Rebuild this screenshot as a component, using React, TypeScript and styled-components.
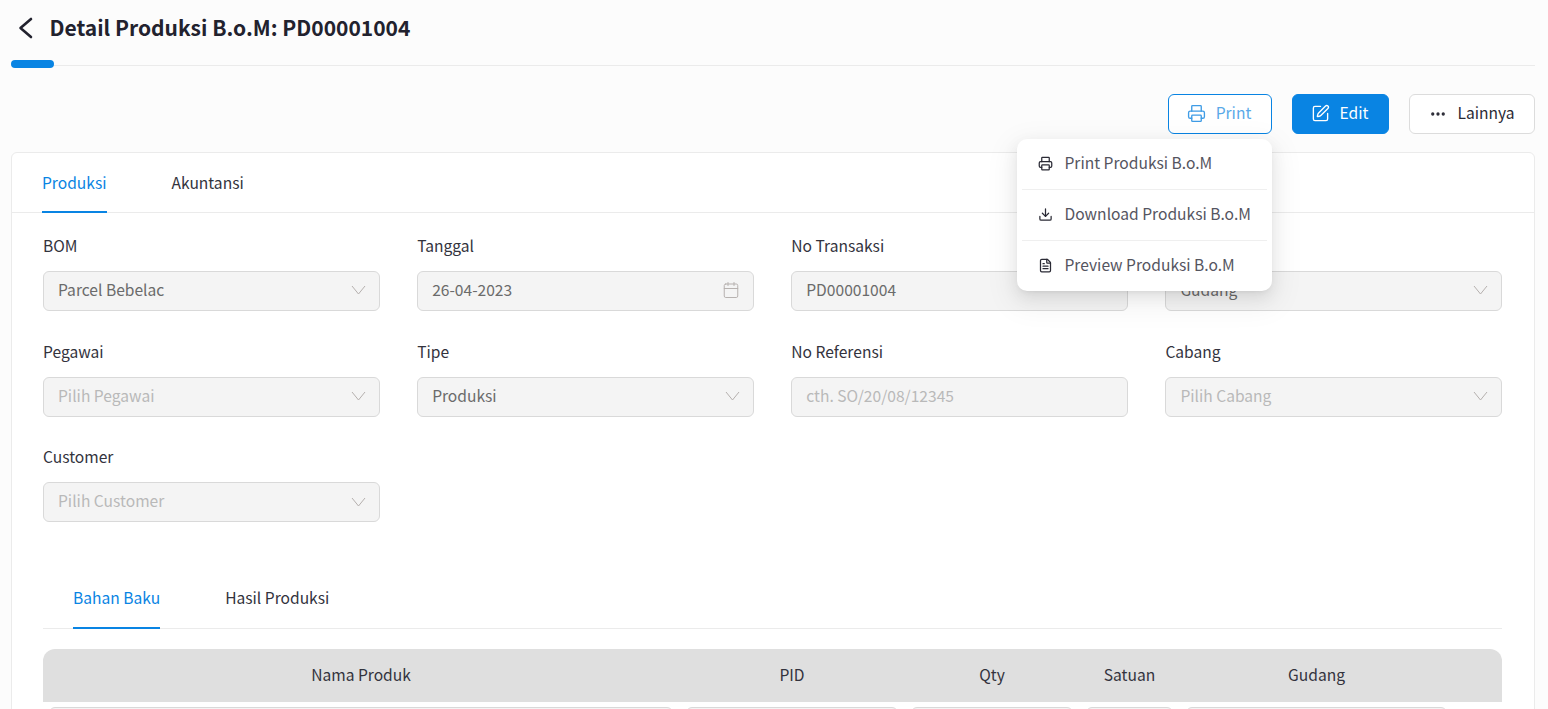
import React from "react";
import styled, { createGlobalStyle } from "styled-components";
import { Printer, SquarePen, Ellipsis, Download, FileText, Calendar } from "lucide-react";

const Global = createGlobalStyle`
  html, body { margin: 0; padding: 0; background: #fcfcfc; }
  body { font-family: "Noto Sans CJK SC", "Noto Sans", sans-serif; color: #2a2a35; }
  * { box-sizing: border-box; }
`;
const Page = styled.div`height: 709px; overflow: hidden; padding: 0 13px 0 11px;`;
const Header = styled.header`
  height: 66px; position: relative; border-bottom: 1px solid #ebebeb;
  display: flex; align-items: flex-start; padding: 11px 0 0 4px; gap: 13.5px;
`;
const Title = styled.h1`font-size: 21px; line-height: 34px; font-weight: 700; color: #22222e; margin: -1px 0 0;`;
const Pill = styled.span`position: absolute; left: 0; bottom: -3px; width: 43px; height: 8px; border-radius: 4px; background: #0984e3;`;
const BackIcon = styled.svg`display: block; width: 21px; height: 34px; color: #22222e; flex: none;`;
const Toolbar = styled.div`display: flex; justify-content: flex-end; gap: 20px; padding-top: 28px; height: 86px;`;
const ToolWrap = styled.div`position: relative;`;
const Btn = styled.button<{ $v: "outline" | "solid" | "plain"; $w: number }>`
  width: ${p => p.$w}px; height: 40px; border-radius: 6px; display: flex; align-items: center; justify-content: center; gap: 10px;
  font: 400 15.6px "Noto Sans CJK SC", sans-serif; padding: 0 ${p => (p.$v === "plain" ? 0 : 2)}px 5px 0;
  background: ${p => (p.$v === "solid" ? "#0984e3" : "#fff")};
  color: ${p => (p.$v === "solid" ? "#fff" : p.$v === "outline" ? "#5aa9e8" : "#2a2a35")};
  border: 1px solid ${p => (p.$v === "solid" ? "#0984e3" : p.$v === "outline" ? "#0984e3" : "#dcdcdc")};
  svg { color: ${p => (p.$v === "outline" ? "#3f9ce6" : "inherit")}; margin-top: 4px; }
`;
const Menu = styled.div`
  position: absolute; z-index: 5; top: 45px; right: 0; width: 255px; height: 152px; background: #fff; border-radius: 10px;
  padding: 0 5px; box-shadow: 0 6px 16px rgba(0,0,0,.08), 0 9px 28px 8px rgba(0,0,0,.05), 0 3px 6px -4px rgba(0,0,0,.12);
  display: flex; flex-direction: column;
`;
const MenuItem = styled.div`
  flex: 1; display: flex; align-items: center; gap: 11.5px; padding: 0 0 5px 16px; font-size: 15.6px; color: #55555f;
  svg { color: #2a2a35; flex: none; margin-top: 4px; }
  & + & { border-top: 1px solid #efefef; }
`;
const Card = styled.section`background: #fff; border: 1px solid #ebebeb; border-radius: 6px 6px 0 0; height: 600px;`;
const Tabs = styled.div<{ $inset: number; $gap: number; $h: number }>`
  display: flex; gap: ${p => p.$gap}px; padding-left: ${p => p.$inset}px; height: ${p => p.$h}px; border-bottom: 1px solid #ebebeb;
`;
const Tab = styled.div<{ $active?: boolean; $pb: number }>`
  display: flex; align-items: center; font-size: 15.6px; height: calc(100% + 1px); padding-bottom: ${p => p.$pb}px;
  color: ${p => (p.$active ? "#0984e3" : "#33333d")};
  border-bottom: 2px solid ${p => (p.$active ? "#0984e3" : "transparent")};
`;
const Body = styled.div`padding: 21px 32px 0 31px;`;
const Grid = styled.div`
  display: grid; grid-template-columns: repeat(4, 1fr); column-gap: 37.5px; row-gap: 28.95px; height: 335px; align-content: start;
`;
const Field = styled.div`display: flex; flex-direction: column; gap: 13.8px; height: 76.8px;`;
const Label = styled.label`font-size: 15.6px; line-height: 23px; color: #33333d;`;
const Input = styled.div<{ $ph?: boolean }>`
  height: 40px; background: #f4f4f4; border: 1px solid #d9d9d9; border-radius: 6px; padding: 0 14px 4px;
  display: flex; align-items: center; justify-content: space-between; font-size: 15.6px;
  color: ${p => (p.$ph ? "#b9b9b9" : "#6b6b6b")};
  svg { color: #b5b0ae; flex: none; margin-top: 3px; }
`;
const CalIcon = styled(Calendar)`margin-right: -1px;`;
const Chevron = styled.svg`display: block; width: 15px; height: 10px; margin-right: -1px;`;
const THead = styled.div`
  margin-top: 20px; height: 53px; background: #dfdfdf; border-radius: 12px 12px 0 0; padding-bottom: 4px;
  display: grid; grid-template-columns: 637px 225px 175px 100px 274px 1fr; align-items: center;
`;
const Th = styled.div`text-align: center; font-size: 15.6px; color: #33333d; padding-right: 1px;`;
const TRow = styled.div`
  display: grid; grid-template-columns: 637px 225px 175px 100px 274px 1fr; padding-top: 5px;
`;
const Cell = styled.div`margin: 0 7px 0 6px; height: 40px; background: #f4f4f4; border: 1px solid #d9d9d9; border-radius: 6px;`;

const fields: { l: string; v: string; ph?: boolean; icon?: "cal" | "none" }[] = [
  { l: "BOM", v: "Parcel Bebelac" },
  { l: "Tanggal", v: "26-04-2023", icon: "cal" },
  { l: "No Transaksi", v: "PD00001004", icon: "none" },
  { l: "Gudang", v: "Gudang" },
  { l: "Pegawai", v: "Pilih Pegawai", ph: true },
  { l: "Tipe", v: "Produksi" },
  { l: "No Referensi", v: "cth. SO/20/08/12345", ph: true, icon: "none" },
  { l: "Cabang", v: "Pilih Cabang", ph: true },
  { l: "Customer", v: "Pilih Customer", ph: true },
];

export default function App() {
  return (
    <Page>
      <Global />
      <Header>
        <BackIcon viewBox="0 0 21 34" fill="none">
          <path d="M16 8 L5.5 17 L16 26" stroke="currentColor" strokeWidth="2.6" strokeLinecap="round" strokeLinejoin="round" />
        </BackIcon>
        <Title>Detail Produksi B.o.M: PD00001004</Title>
        <Pill />
      </Header>
      <Toolbar>
        <ToolWrap>
          <Btn $v="outline" $w={104}><Printer size={19} strokeWidth={1.7} />Print</Btn>
          <Menu>
            <MenuItem><Printer size={15} strokeWidth={2} />Print Produksi B.o.M</MenuItem>
            <MenuItem><Download size={15} strokeWidth={2} />Download Produksi B.o.M</MenuItem>
            <MenuItem><FileText size={15} strokeWidth={2} />Preview Produksi B.o.M</MenuItem>
          </Menu>
        </ToolWrap>
        <Btn $v="solid" $w={97}><SquarePen size={19} strokeWidth={1.7} />Edit</Btn>
        <Btn $v="plain" $w={126}><Ellipsis size={18} strokeWidth={2.4} />Lainnya</Btn>
      </Toolbar>
      <Card>
        <Tabs $inset={30} $gap={65} $h={60}>
          <Tab $active $pb={1}>Produksi</Tab>
          <Tab $pb={1}>Akuntansi</Tab>
        </Tabs>
        <Body>
          <Grid>
            {fields.map(f => (
              <Field key={f.l}>
                <Label>{f.l}</Label>
                <Input $ph={f.ph}>
                  {f.v}
                  {f.icon === "cal" ? (
                    <CalIcon size={18} strokeWidth={1.3} />
                  ) : f.icon === "none" ? null : (
                    <Chevron viewBox="0 0 15 10" fill="none">
                      <path d="M1 1 L7.5 9 L14 1" stroke="currentColor" strokeWidth="1" />
                    </Chevron>
                  )}
                </Input>
              </Field>
            ))}
          </Grid>
          <Tabs $inset={30} $gap={65} $h={60}>
            <Tab $active $pb={3}>Bahan Baku</Tab>
            <Tab $pb={3}>Hasil Produksi</Tab>
          </Tabs>
          <THead>
            <Th>Nama Produk</Th><Th>PID</Th><Th>Qty</Th><Th>Satuan</Th><Th>Gudang</Th><Th />
          </THead>
          <TRow>
            <Cell /><Cell /><Cell /><Cell /><Cell />
          </TRow>
        </Body>
      </Card>
    </Page>
  );
}
